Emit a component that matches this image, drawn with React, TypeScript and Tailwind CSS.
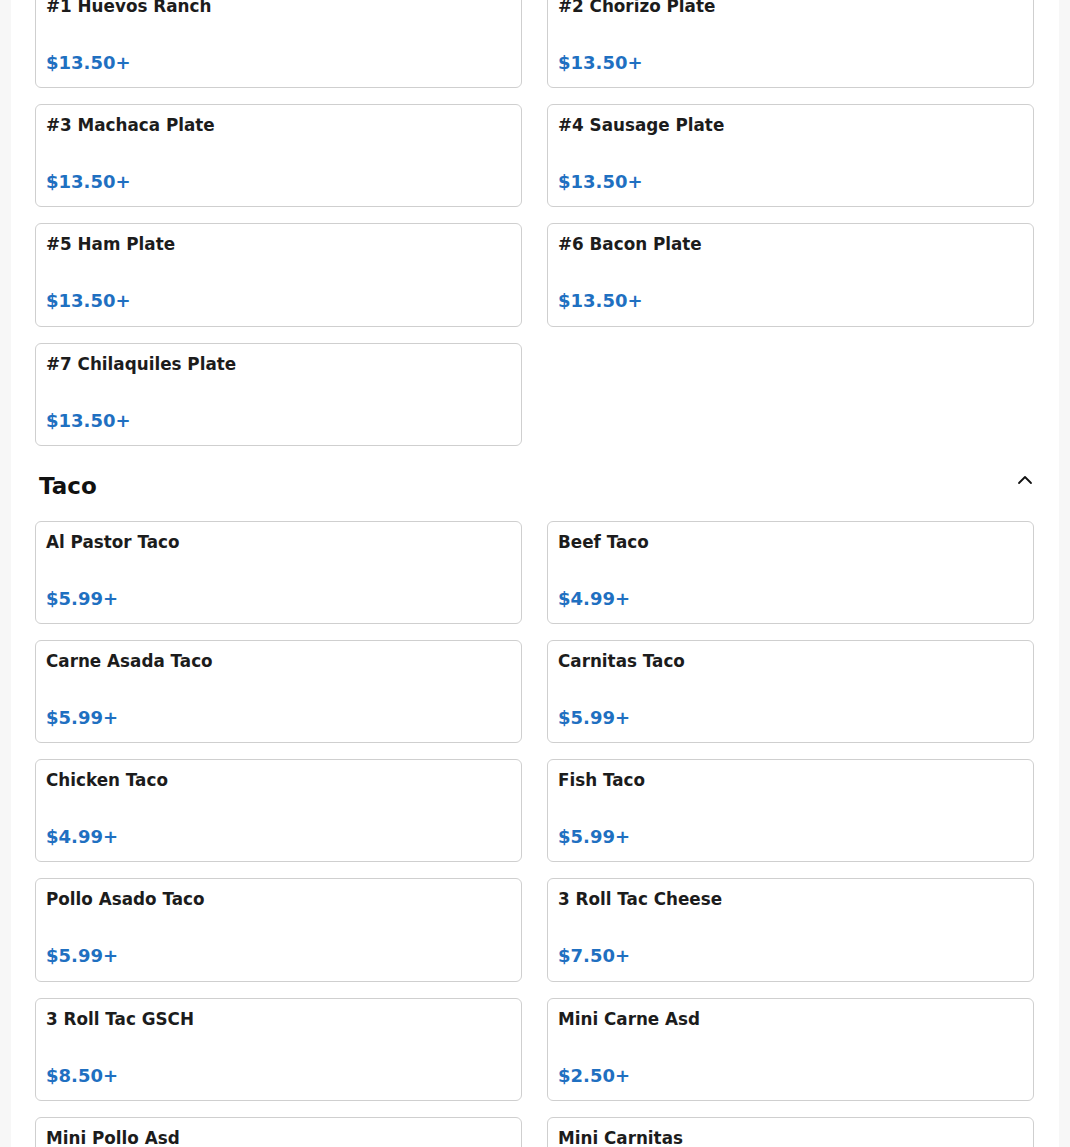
import React from "react";

type Item = { name: string; price: string };

const plates: Item[] = [
  { name: "#1 Huevos Ranch", price: "$13.50+" },
  { name: "#2 Chorizo Plate", price: "$13.50+" },
  { name: "#3 Machaca Plate", price: "$13.50+" },
  { name: "#4 Sausage Plate", price: "$13.50+" },
  { name: "#5 Ham Plate", price: "$13.50+" },
  { name: "#6 Bacon Plate", price: "$13.50+" },
  { name: "#7 Chilaquiles Plate", price: "$13.50+" },
];

const tacos: Item[] = [
  { name: "Al Pastor Taco", price: "$5.99+" },
  { name: "Beef Taco", price: "$4.99+" },
  { name: "Carne Asada Taco", price: "$5.99+" },
  { name: "Carnitas Taco", price: "$5.99+" },
  { name: "Chicken Taco", price: "$4.99+" },
  { name: "Fish Taco", price: "$5.99+" },
  { name: "Pollo Asado Taco", price: "$5.99+" },
  { name: "3 Roll Tac Cheese", price: "$7.50+" },
  { name: "3 Roll Tac GSCH", price: "$8.50+" },
  { name: "Mini Carne Asd", price: "$2.50+" },
  { name: "Mini Pollo Asd", price: "$2.50+" },
  { name: "Mini Carnitas", price: "$2.50+" },
];

function Card({ item }: { item: Item }) {
  return (
    <div className="h-[103.2px] rounded-[6px] border border-[#cfcfcf] bg-white px-[10px] pt-[11px]">
      <div className="text-[16.8px] font-bold leading-[19px] text-[#1c1c1c]">{item.name}</div>
      <div className="mt-[36px] text-[18px] font-bold leading-[21px] text-[#1f70c1]">{item.price}</div>
    </div>
  );
}

function Grid({ items }: { items: Item[] }) {
  return (
    <div className="grid grid-cols-2 gap-x-[25px] gap-y-[16px]">
      {items.map((it) => (
        <Card key={it.name} item={it} />
      ))}
    </div>
  );
}

export default function App() {
  return (
    <div
      className="h-[1147px] overflow-hidden bg-[#f7f7f7] px-[11px]"
      style={{ fontFamily: '"DejaVu Sans", "Liberation Sans", sans-serif' }}
    >
      <div className="min-h-full bg-white pl-[24px] pr-[25px]">
        <div className="-mt-[15px]">
          <Grid items={plates} />
          <div className="-mr-[3px] flex items-center justify-between pb-[21px] pl-[4px] pt-[26px]">
            <h2 className="text-[23px] font-bold leading-[28px] text-[#111111]">Taco</h2>
            <svg
              width="24"
              height="24"
              viewBox="0 0 24 24"
              fill="none"
              stroke="#111"
              strokeWidth="1.8"
              strokeLinecap="round"
              strokeLinejoin="round"
              className="-mt-[12px]"
            >
              <path d="m18 15-6-6-6 6" />
            </svg>
          </div>
          <Grid items={tacos} />
        </div>
      </div>
    </div>
  );
}
